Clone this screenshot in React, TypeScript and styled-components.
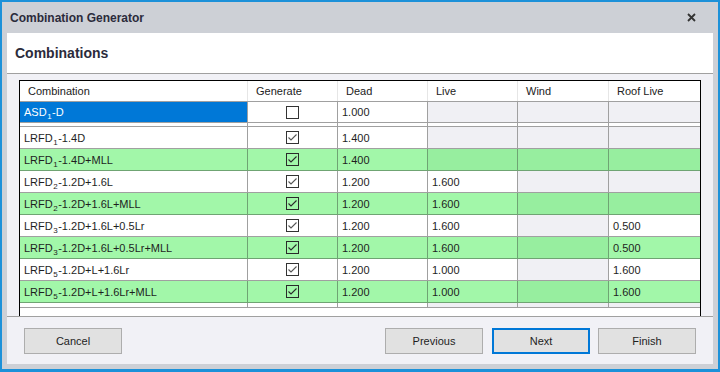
import React from 'react';
import styled, { createGlobalStyle } from 'styled-components';

const GlobalStyle = createGlobalStyle`
  html, body {
    margin: 0;
    padding: 0;
    background: #ffffff;
  }
  * {
    box-sizing: border-box;
  }
`;

const Window = styled.div`
  width: 720px;
  height: 372px;
  border: 2px solid #1c91d9;
  border-bottom-width: 3px;
  background: #cdd0d6;
  display: flex;
  flex-direction: column;
  font-family: "Segoe UI", "Liberation Sans", Arial, sans-serif;
  color: #1e1e1e;
  overflow: hidden;
`;

const TitleBar = styled.div`
  height: 31px;
  flex: none;
  display: flex;
  align-items: center;
  justify-content: space-between;
  padding: 0 22px 0 8px;
`;

const Title = styled.div`
  font-family: "Liberation Sans", Arial, sans-serif;
  font-weight: bold;
  font-size: 12px;
  color: #2b2b3b;
`;

const CloseIcon = styled.svg`
  width: 9px;
  height: 9px;
  display: block;
`;

const Main = styled.div`
  flex: 1;
  margin: 0 5px 5px 5px;
  display: flex;
  flex-direction: column;
  background: #f1f1f6;
`;

const Header = styled.div`
  height: 41px;
  flex: none;
  background: #ffffff;
  border-bottom: 1px solid #a0a0a0;
  display: flex;
  align-items: center;
  padding: 0 8px 1px 8px;
  font-family: "Liberation Sans", Arial, sans-serif;
  font-weight: bold;
  font-size: 14px;
  color: #2b2b3b;
`;

const Body = styled.div`
  padding: 6px 12px 0 12px;
  flex: none;
`;

const GridArea = styled.div`
  height: 236px;
  border: 1px solid #000000;
  border-bottom: none;
  background: #ffffff;
  overflow: hidden;
  font-size: 11px;
  font-family: "Liberation Sans", Arial, sans-serif;
`;

const columns = '228px 90px 90px 90px 91px 1fr';

const HeadRow = styled.div`
  display: grid;
  grid-template-columns: ${columns};
  height: 21px;
  border-bottom: 1px solid #a0a0a0;
`;

const HeadCell = styled.div`
  display: flex;
  align-items: center;
  padding-left: 8px;
  border-right: 1px solid #e6e6e6;
  color: #222222;
  &:last-child {
    border-right: none;
  }
`;

const Row = styled.div<{ $green?: boolean; $height?: number }>`
  display: grid;
  grid-template-columns: ${columns};
  height: ${(p) => p.$height ?? 22}px;
  border-bottom: 1px solid ${(p) => (p.$green ? '#6fa473' : '#a0a0a0')};
  background: ${(p) => (p.$green ? '#a2f7a9' : '#ffffff')};
`;

const Cell = styled.div<{ $green?: boolean; $empty?: boolean; $selected?: boolean; $center?: boolean }>`
  display: flex;
  align-items: center;
  justify-content: ${(p) => (p.$center ? 'center' : 'flex-start')};
  padding-left: ${(p) => (p.$center ? 0 : 4)}px;
  border-right: 1px solid ${(p) => (p.$green ? '#6fa473' : '#a0a0a0')};
  white-space: nowrap;
  color: ${(p) => (p.$selected ? '#ffffff' : '#1e1e1e')};
  background: ${(p) =>
    p.$selected ? '#0078d7' : p.$empty ? (p.$green ? '#97ee9f' : '#f0f0f4') : 'transparent'};
  &:last-child {
    border-right: none;
  }
`;

const Label = styled.span`
  line-height: 14px;
`;

const Sub = styled.sub`
  font-size: 8px;
  vertical-align: -3px;
  line-height: 0;
  margin: 0 0.5px;
`;

const Box = styled.span<{ $green?: boolean }>`
  width: 13px;
  height: 13px;
  border: 1px solid ${(p) => (p.$green ? '#2a2a2a' : '#333333')};
  background: ${(p) => (p.$green ? 'transparent' : '#ffffff')};
  display: flex;
  align-items: center;
  justify-content: center;
`;

const Footer = styled.div`
  flex: 1;
  border-top: 1px solid #a0a0a0;
  display: flex;
  align-items: flex-start;
  padding: 11px 17px 0 17px;
`;

const Spacer = styled.div`
  flex: 1;
`;

const Button = styled.button<{ $primary?: boolean }>`
  width: 98px;
  height: 26px;
  margin-left: ${(p) => (p.$primary ? 9 : 8)}px;
  background: #e1e1e1;
  border: ${(p) => (p.$primary ? '2px solid #0078d7' : '1px solid #adadad')};
  font-family: "Liberation Sans", Arial, sans-serif;
  font-size: 11px;
  color: #1e1e1e;
  padding: 0;
  &:first-child {
    margin-left: 0;
  }
`;

type Combo = {
  base: string;
  sub: string;
  rest: string;
  gen: boolean;
  dead: string;
  live: string | null;
  wind: string | null;
  roof: string | null;
  green?: boolean;
};

const combos: Combo[] = [
  { base: 'LRFD', sub: '1', rest: '-1.4D', gen: true, dead: '1.400', live: null, wind: null, roof: null },
  { base: 'LRFD', sub: '1', rest: '-1.4D+MLL', gen: true, dead: '1.400', live: null, wind: null, roof: null, green: true },
  { base: 'LRFD', sub: '2', rest: '-1.2D+1.6L', gen: true, dead: '1.200', live: '1.600', wind: null, roof: null },
  { base: 'LRFD', sub: '2', rest: '-1.2D+1.6L+MLL', gen: true, dead: '1.200', live: '1.600', wind: null, roof: null, green: true },
  { base: 'LRFD', sub: '3', rest: '-1.2D+1.6L+0.5Lr', gen: true, dead: '1.200', live: '1.600', wind: null, roof: '0.500' },
  { base: 'LRFD', sub: '3', rest: '-1.2D+1.6L+0.5Lr+MLL', gen: true, dead: '1.200', live: '1.600', wind: null, roof: '0.500', green: true },
  { base: 'LRFD', sub: '5', rest: '-1.2D+L+1.6Lr', gen: true, dead: '1.200', live: '1.000', wind: null, roof: '1.600' },
  { base: 'LRFD', sub: '5', rest: '-1.2D+L+1.6Lr+MLL', gen: true, dead: '1.200', live: '1.000', wind: null, roof: '1.600', green: true },
];

function CheckBox({ checked, green }: { checked: boolean; green?: boolean }) {
  return (
    <Box $green={green}>
      {checked && (
        <svg width="11" height="11" viewBox="0 0 11 11">
          <polyline
            points="1.5,5.5 4,8 9.5,2.5"
            fill="none"
            stroke={green ? '#2a2a2a' : '#555555'}
            strokeWidth="1.1"
          />
        </svg>
      )}
    </Box>
  );
}

function ComboRow({ c, selected }: { c: Combo; selected?: boolean }) {
  const g = c.green;
  return (
    <Row $green={g} $height={selected ? 21 : 22}>
      <Cell $green={g} $selected={selected}>
        <Label>
          {c.base}
          <Sub>{c.sub}</Sub>
          {c.rest}
        </Label>
      </Cell>
      <Cell $green={g} $center>
        <CheckBox checked={c.gen} green={g} />
      </Cell>
      <Cell $green={g}>{c.dead}</Cell>
      <Cell $green={g} $empty={!c.live}>{c.live}</Cell>
      <Cell $green={g} $empty={!c.wind}>{c.wind}</Cell>
      <Cell $green={g} $empty={!c.roof}>{c.roof}</Cell>
    </Row>
  );
}

export default function App() {
  const asd: Combo = { base: 'ASD', sub: '1', rest: '-D', gen: false, dead: '1.000', live: null, wind: null, roof: null };

  return (
    <>
      <GlobalStyle />
      <Window>
        <TitleBar>
          <Title>Combination Generator</Title>
          <CloseIcon viewBox="0 0 9 9">
            <path d="M1 1 L8 8 M8 1 L1 8" stroke="#333333" strokeWidth="1.8" />
          </CloseIcon>
        </TitleBar>
        <Main>
          <Header>Combinations</Header>
          <Body>
            <GridArea>
              <HeadRow>
                <HeadCell>Combination</HeadCell>
                <HeadCell>Generate</HeadCell>
                <HeadCell>Dead</HeadCell>
                <HeadCell>Live</HeadCell>
                <HeadCell>Wind</HeadCell>
                <HeadCell>Roof Live</HeadCell>
              </HeadRow>
              <ComboRow c={asd} selected />
              <Row $height={4}>
                <Cell />
                <Cell />
                <Cell />
                <Cell />
                <Cell />
                <Cell />
              </Row>
              {combos.map((c, i) => (
                <ComboRow key={i} c={c} />
              ))}
              <Row $height={5}>
                <Cell />
                <Cell />
                <Cell />
                <Cell $empty />
                <Cell $empty />
                <Cell $empty />
              </Row>
            </GridArea>
          </Body>
          <Footer>
            <Button>Cancel</Button>
            <Spacer />
            <Button>Previous</Button>
            <Button $primary>Next</Button>
            <Button>Finish</Button>
          </Footer>
        </Main>
      </Window>
    </>
  );
}
